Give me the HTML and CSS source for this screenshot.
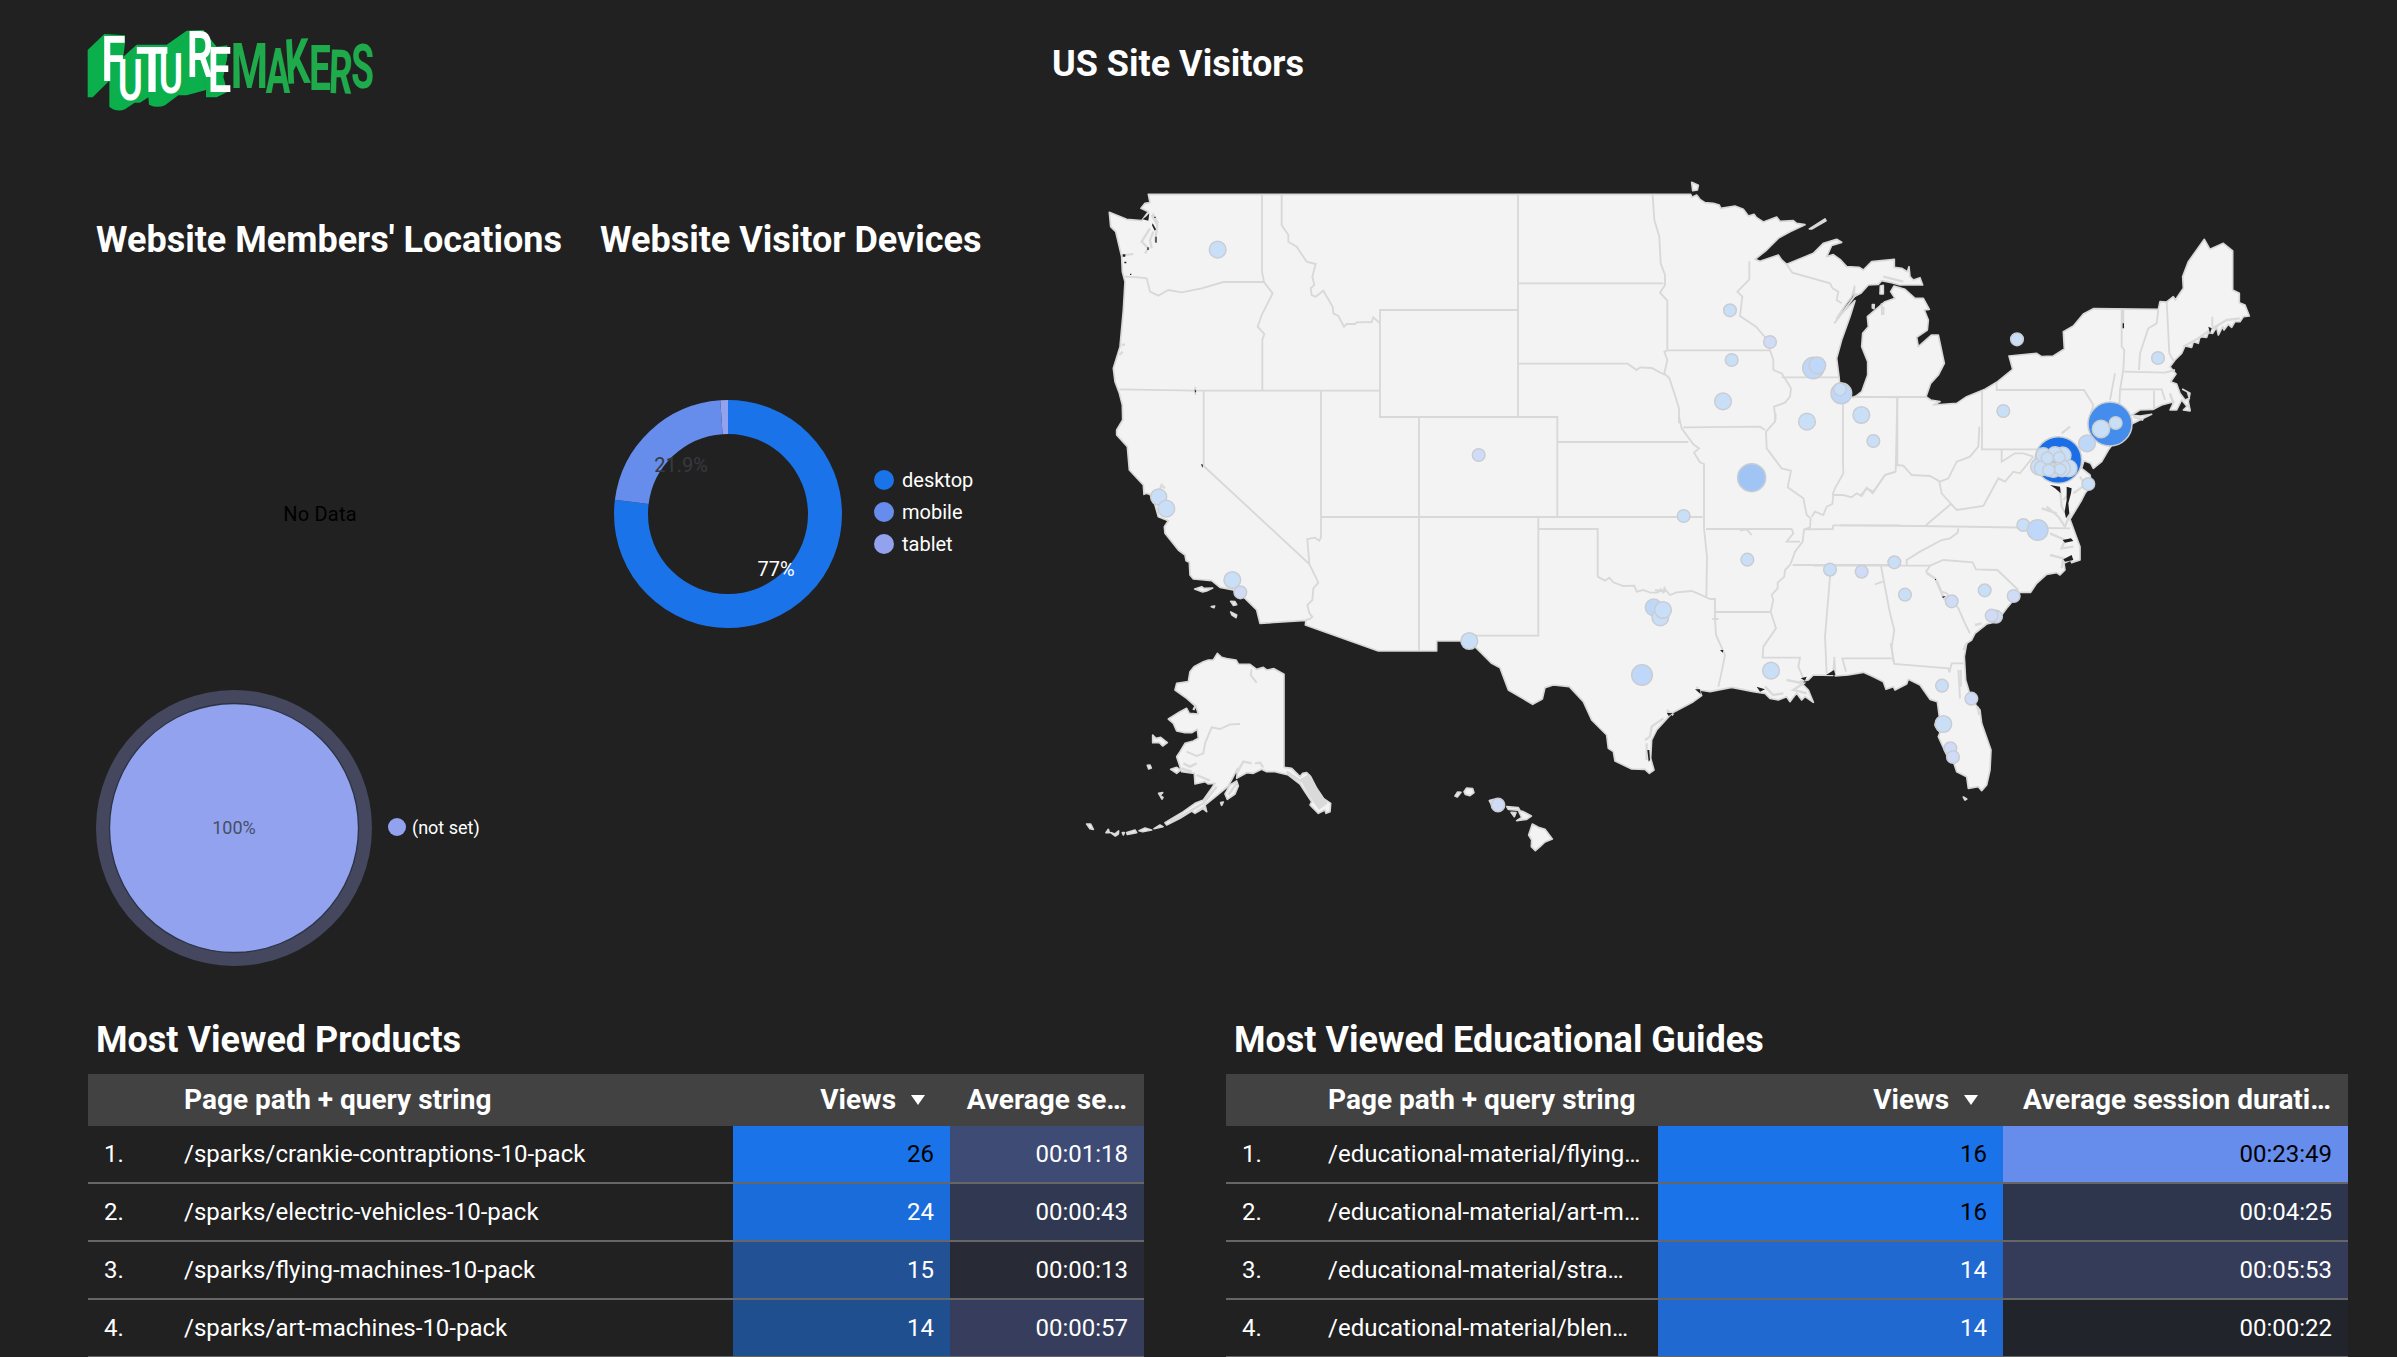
FILE: index.html
```html
<!DOCTYPE html>
<html lang="en">
<head>
<meta charset="utf-8">
<title>US Site Visitors</title>
<link rel="stylesheet" href="styles.css">
</head>
<body>
<div class="page">
  <header class="header">
    <svg class="logo" viewBox="0 0 990 360" role="img" aria-label="Futuremakers">
      <path class="logo-depth" d="M53 120L103 72L165 76V100L160 140L200 104L290 104L350 62L400 60L416 80L440 110L472 106V140L460 200L472 246L440 262H408V240L350 256L325 256L285 286Q262 296 237 284L235 262L210 278L194 278L165 298Q140 308 118 290V212L68 262H53Z"/>
      <path class="logo-line" d="M103 76L76 108M190 120L180 150M358 70L312 120M345 210L330 240M400 200L412 250M440 165L472 150"/>
      <g class="logo-front">
        <text transform="translate(94 212) scale(.7 1)" font-size="190">F</text>
        <text transform="translate(143 270) scale(.66 1)" font-size="174">U</text>
        <text transform="translate(197 245) scale(.84 1)" font-size="190">T</text>
        <text transform="translate(266 249) scale(.66 1)" font-size="168">U</text>
        <text transform="translate(350 202) scale(.64 1)" font-size="194">R</text>
        <text transform="translate(413 246) scale(.66 1)" font-size="190">E</text>
      </g>
      <g class="logo-back">
        <text transform="translate(482 235) scale(.68 1)" font-size="188">M</text>
        <text transform="translate(587 250) scale(.58 1)" font-size="188">A</text>
        <text transform="translate(648 222) rotate(-3) scale(.62 1)" font-size="188">K</text>
        <text transform="translate(717 240) scale(.62 1)" font-size="188">E</text>
        <text transform="translate(775 249) rotate(2) scale(.6 1)" font-size="184">R</text>
        <text transform="translate(844 234) scale(.6 1)" font-size="184">S</text>
      </g>
    </svg>
    <h1 class="title">US Site Visitors</h1>
  </header>

  <section class="overview">
    <div class="panels">
      <div class="panel">
        <h2 class="heading">Website Members' Locations</h2>
        <p class="no-data">No Data</p>
        <div class="chart-row">
          <svg class="pie" viewBox="0 0 276 276">
            <circle cx="138" cy="138" r="138" fill="#45475f"/>
            <circle cx="138" cy="138" r="124.5" fill="#92a2ef" stroke="#2b3443" stroke-width="1.3"/>
            <text class="pie-label" x="138" y="144">100%</text>
          </svg>
          <ul class="legend legend-small"><li><i class="dot c3"></i>(not set)</li></ul>
        </div>
      </div>
      <div class="panel devices">
        <h2 class="heading">Website Visitor Devices</h2>
        <div class="chart-row donut-row">
          <svg class="donut" viewBox="0 0 228 228">
            <g transform="rotate(-90 114 114)" fill="none" stroke-width="34">
              <circle cx="114" cy="114" r="97" stroke="#1a73e8" pathLength="100" stroke-dasharray="77 23"/>
              <circle cx="114" cy="114" r="97" stroke="#668cec" pathLength="100" stroke-dasharray="21.9 78.1" stroke-dashoffset="-77"/>
              <circle cx="114" cy="114" r="97" stroke="#92a2ef" pathLength="100" stroke-dasharray="1.1 98.9" stroke-dashoffset="-98.9"/>
            </g>
            <text class="donut-label dim" x="67" y="72">21.9%</text>
            <text class="donut-label" x="162" y="176">77%</text>
          </svg>
          <ul class="legend">
            <li><i class="dot c1"></i>desktop</li>
            <li><i class="dot c2"></i>mobile</li>
            <li><i class="dot c3"></i>tablet</li>
          </ul>
        </div>
      </div>
    </div>

    <svg class="map" viewBox="0 0 3630 2160">
      <g class="land">
        <path d="M235 103L1862 103 1866 112 1880 105 1890 118 1905 128 1930 130 1948 135 1952 145 1995 138 2020 148 2035 168 2052 163 2060 173 2080 186 2120 171 2130 184 2170 182 2180 190 2205 194 2160 215 2127 233 2090 270 2055 298 2070 304 2125 285 2135 300 2150 313 2230 280 2260 250 2300 238 2315 247 2285 256 2270 290 2290 284 2310 298 2330 320 2368 322 2380 330 2405 305 2473 298 2473 322 2495 325 2512 335 2517 320 2520 350 2530 360 2550 353 2558 375 2490 375 2465 368 2435 362 2425 373 2395 375 2372 400 2352 410 2354 378 2345 410 2330 430 2300 475 2355 422 2340 470 2315 540 2300 595 2307 650 2310 680 2330 705 2352 713 2375 695 2393 645 2393 605 2375 560 2378 520 2395 500 2392 470 2445 425 2475 415 2462 395 2472 378 2505 388 2535 415 2560 415 2578 448 2563 450 2575 480 2572 510 2540 532 2545 560 2585 525 2605 525 2623 610 2605 645 2582 670 2568 710 2582 720 2610 725 2590 735 2660 730 2690 710 2745 688 2780 667 2828 628 2817 588 2900 580 2915 590 2950 588 2983 567 2980 515 3010 498 3040 462 3070 446 3265 448 3270 425 3290 426 3310 410 3316 420 3340 385 3338 350 3355 305 3403 238 3420 268 3460 250 3488 273 3488 390 3508 400 3508 428 3525 435 3538 468 3520 470 3510 485 3495 485 3485 502 3475 493 3462 510 3458 500 3445 525 3440 502 3428 520 3415 518 3410 532 3390 530 3385 550 3370 545 3365 562 3345 558 3335 580 3315 600 3300 620 3318 642 3302 665 3320 672 3330 700 3345 720 3358 715 3352 695 3338 688 3360 700 3355 725 3360 750 3335 720 3320 750 3300 750 3312 725 3275 735 3250 748 3210 750 3185 765 3210 768 3245 763 3185 792 3130 850 3115 870 3095 905 3070 925 3062 910 3042 902 3035 925 3060 945 3065 975 3045 1000 3035 1020 3020 1045 3000 1078 3030 1160 3030 1200 3005 1208 3002 1200 2982 1210 2985 1230 2970 1245 2960 1238 2930 1243 2900 1270 2882 1297 2850 1297 2810 1345 2780 1385 2750 1392 2715 1420 2705 1440 2690 1450 2683 1490 2687 1560 2705 1620 2730 1650 2735 1690 2763 1770 2760 1830 2750 1875 2735 1892 2725 1880 2695 1885 2690 1850 2660 1835 2650 1805 2630 1785 2605 1730 2610 1718 2595 1695 2608 1670 2602 1625 2580 1618 2550 1575 2515 1558 2510 1572 2475 1590 2470 1580 2448 1588 2440 1565 2410 1550 2380 1537 2335 1545 2296 1548 2293 1500 2288 1546 2230 1545 2215 1560 2190 1565 2215 1590 2230 1627 2205 1610 2195 1620 2180 1600 2170 1612 2160 1625 2150 1610 2125 1620 2100 1615 2085 1600 2050 1595 1985 1582 1920 1595 1888 1590 1895 1607 1870 1625 1805 1660 1760 1710 1745 1740 1742 1795 1752 1830 1738 1840 1725 1828 1685 1827 1635 1803 1630 1775 1615 1765 1610 1725 1565 1680 1540 1625 1498 1580 1450 1575 1425 1583 1417 1617 1388 1633 1315 1590 1290 1523 1265 1510 1220 1465 1198 1443 1100 1443 1100 1473 925 1473 706 1395 708 1381 570 1390 560 1350 525 1315 490 1290 450 1282 425 1262 370 1257 360 1245 358 1207 348 1202 345 1185 325 1170 285 1120 283 1100 295 1082 265 1070 255 1035 240 1003 230 1000 222 1003 220 975 178 930 172 860 140 825 140 810 158 780 157 735 148 700 135 665 130 625 150 560 160 450 165 365 157 335 155 290 137 215 122 200 118 157 170 178 215 182 235 155 213 145 225 130 240 128Z"/>
        <path d="M2218 207L2265 177 2268 182 2225 207ZM1865 67L1885 76 1882 90 1868 92ZM2431 378L2440 376 2440 402 2430 402ZM2407 434L2413 434 2412 446 2407 444ZM374 1287L395 1280 402 1285 428 1284 410 1293 398 1296ZM482 1324L495 1325 500 1334 490 1336ZM482 1356L500 1365 498 1373 486 1365ZM424 1340L434 1338 432 1343ZM2680 1911L2690 1917 2685 1920ZM3340 750L3355 735 3360 753Z"/>
        <g transform="translate(0 1410)">
          <path d="M442 70L455 82 470 86 498 90 505 102 540 103 560 118 580 112 590 120 612 116 642 133 642 412 665 415 690 440 698 430 710 428 722 440 740 475 760 505 782 520 780 545 768 550 765 540 745 550 720 525 725 515 705 485 690 462 655 435 615 425 590 425 575 418 550 430 530 428 500 445 503 415 495 430 475 468 430 505 405 525 410 545 398 535 375 550 365 543 330 565 290 585 285 578 340 545 375 520 400 510 425 475 435 460 415 462 405 455 375 462 373 430 335 425 330 410 320 380 330 365 345 340 370 333 385 325 382 298 365 308 345 308 320 303 310 280 295 267 330 245 350 235 358 250 385 252 378 230 350 205 315 180 320 160 355 155 360 125 372 110 400 95 415 90 430 90Z"/>
          <path d="M248 315L258 325 272 322 292 338 278 348 268 338 248 338ZM302 418L320 412 332 420 320 430ZM232 406L240 405 244 414 236 417ZM266 490L278 488 270 496 279 502 276 507ZM465 492L480 465 500 453 505 468 495 492 472 508ZM452 518L460 516 455 526ZM50 582L62 582 70 598 60 596ZM108 608L115 598 118 608ZM122 608L135 612 146 603 145 612 136 618ZM157 608L163 608 160 615ZM170 608L195 600 200 608 172 613ZM207 602L225 594 245 600 218 605ZM252 596L270 585 279 590ZM1155 498L1163 486 1173 487 1162 501ZM1182 485L1190 474 1208 476 1212 488 1200 497 1186 493ZM1258 512L1272 508 1280 520 1265 525ZM1310 530L1345 533 1350 541 1315 538ZM1323 547L1338 548 1333 560ZM1345 542L1360 545 1384 558 1370 568 1340 572 1355 562ZM1387 582L1405 592 1425 598 1447 627 1425 636 1410 650 1396 662 1384 650 1385 630 1376 615Z"/>
        </g>
      </g>
      <g class="borders">
        <path d="M165 350L205 352 230 355 240 395 265 407 295 390 335 397 395 385 460 366 582 366M576 105V335L582 366 608 400 575 465 563 500 583 522 577 540V690M635 105V195L655 225V245L680 260 710 305 737 312 727 350 733 375 722 385 725 405 737 410 760 392 788 440 790 460 805 468 822 500 830 492H855L860 487 905 486 910 472 930 490M1344 450H930V771H1462V1071M148 688L376 692H930M401 692V918L718 1212 745 1268 730 1285 727 1320 712 1335 718 1360 727 1370 720 1377 708 1380M753 690V1132L748 1142 735 1133 712 1137 718 1212M753 1071H1898M1047 771V1473M1405 1071V1427H1198M1405 1107H1583V1250M376 680V705M2293 1490V1540M248 160L265 190M165 285L190 282"/>
        <path transform="translate(1230 0)" d="M114 105V770M114 370H550M114 611H443L470 630 480 622 515 624 555 645M518 105L523 180 538 230 542 310 555 345V375L540 398 562 422V571L553 575 562 600 553 640 568 655 583 700 597 745V790M562 571H870M808 304V358L772 395 787 410 780 468 828 500 858 535 870 571 880 600V630L905 640 933 685 930 710 915 728 882 740 887 780M905 652H1077M920 313L937 338 1050 370 1058 385 1075 395 1070 420 1085 430M1089 720V905L1090 940 1065 985 1057 1005M1120 710L1260 712M1252 712V915M1130 400L1063 490M1205 430L1206 465"/>
        <path transform="translate(1230 720)" d="M232 126H625M597 50L605 85 640 133 657 145 642 158 660 187 672 192V385L681 470 679 595M610 82L840 80 855 90M887 40L885 65 858 95 860 145 905 205 933 212 923 262 970 295 980 345 992 355 990 382 972 388 968 425 945 455 940 470 930 495 915 510 913 530 893 548 893 565 875 585 880 600 872 635 888 685 850 740 848 773H960L955 800 972 840M678 387H935L940 400 920 425H960M707 636H875M995 350L1005 335 1030 345 1040 320 1057 312 1060 285 1090 285 1115 292 1130 280 1145 288 1160 263 1178 280 1215 225 1248 215M972 388L1058 387 1060 376H1260M938 495H1230M1053 495L1035 710 1040 820M1203 498L1230 640 1243 690 1235 740 1240 785M1098 815L1087 775H1235M353 530L375 542 388 533 400 547 430 558 463 557 470 575 490 570 510 578 530 578 555 568 570 585 590 577 635 573 660 583 690 597H705V655L708 705 735 765 722 830 715 860M525 570L555 575M540 565L552 580M553 560L555 575M780 392L800 388 815 405M697 657H715M1185 553L1208 545"/>
        <path transform="translate(2310 960)" d="M0 136L240 138 690 145M255 138L333 72M355 145L353 158 330 175 305 180 240 215 200 240V255M-80 257H270L310 240 398 247 408 268 472 270 535 330M270 257L258 275 290 300 305 335 320 340 355 385 375 430 390 460M152 490L163 552 325 565 328 577 335 550H370M355 570L360 655"/>
        <path transform="translate(2370 180)" d="M-10 531H198M112 535L107 755 75 765 40 815 20 805 0 828M107 735L130 737 155 765 210 768 240 785 265 775 290 725 330 710 355 680 358 620M366 510V688H540M410 487V510H672L700 555 690 590M238 785L245 820 290 870 370 858 415 775 435 785 460 755 480 760 520 710M425 688V725L465 700H490L520 710M785 266V380L793 390 790 450 780 510 778 560M793 455L915 458 945 450M780 508H905L915 540M882 512V568M895 268L890 310 865 325 840 400 837 450M920 245L928 400 942 425M765 460L750 540M790 270V325M1057 290V320"/>
        <path transform="translate(0 1410)" d="M545 118L542 135 560 158M510 282L480 283 450 297 425 292 405 340 400 370 380 378 350 365"/>
      </g>
      <g class="shore">
        <path d="M240 205L215 245 235 265 225 280M250 215L240 240 245 265M245 165L262 195 255 245M155 555L165 553M148 585L158 575M265 1000L275 975 285 985M3000 800L2975 820M2930 1040L2965 1070 2985 1100 3000 1060M2915 1045L2960 1060M2940 1120L2985 1140 2975 1165 3010 1160M2940 1185L2980 1195 2975 1225M2970 985L2975 1040 2995 1075M3000 1000L2980 1020M3030 950L3045 975 3010 1000M2570 1240L2595 1255 2615 1300 2625 1320M2715 1395L2735 1390M2690 1450L2680 1470M2672 1530V1580M2722 1640L2728 1665M1725 1740L1740 1730 1745 1700 1780 1675M1730 1750V1800M1880 1580L1890 1600M1790 1650L1810 1665M2150 1560L2200 1570 2170 1590 2210 1600M2085 1580L2110 1605 2140 1600M3340 560L3385 535 3420 510 3470 480 3510 475M3300 700L3310 730M3190 770L3220 780M2440 440V465M2440 350L2500 365"/>
        <path transform="translate(0 1410)" d="M650 425L695 455M500 430L520 395 545 400M555 400L570 398 580 412M340 400L360 410 380 400M335 415L365 425M440 470L400 520 340 555 300 575M380 435L420 452M380 545L405 530M500 460L475 495M370 240L378 225"/>
        <path class="fjords" transform="translate(0 1410)" d="M704 440L728 484 760 530"/>
      </g>
      <g class="water">
        <path d="M218 178L235 182 238 160 228 170ZM248 190L258 208 254 212 246 196ZM158 283H166V290H158ZM374 688L379 693 375 699ZM393 912L399 914 397 924ZM2990 980L3005 985 3003 1000 2995 1030 2998 1060 2988 1075 2984 1055 2990 1020ZM2940 975L2970 980 2972 1000 2955 985ZM2978 1140L3003 1135 3010 1143 2985 1148ZM2980 1198L3005 1185 3010 1200 2985 1205ZM1875 1588L1890 1588 1892 1602ZM1790 1658L1808 1660 1796 1668ZM2060 1580L2085 1588 2070 1595ZM2192 1555L2210 1550 2205 1562ZM2268 1545L2292 1530 2296 1545ZM1950 1470L1960 1470 1958 1478ZM2595 1257H2598V1260H2595ZM2615 1310L2628 1308 2620 1314ZM3415 500L3425 505 3420 520ZM3158 490H3162V505H3158ZM1732 1770L1738 1770 1740 1800 1736 1805Z"/>
        <path d="M253 170H257V174H253ZM256 230H260V248H256ZM232 262H236V270H232ZM180 341H184V345H180ZM163 305H169V310H163Z"/>
      </g>
      <g class="pins">
        <circle cx="443" cy="269" r="25"/><circle cx="266" cy="1011" r="24"/><circle cx="289" cy="1046" r="25"/><circle cx="487" cy="1260" r="25"/><circle class="v" cx="511" cy="1297" r="19"/><circle cx="1198" cy="1443" r="25"/><circle class="v" cx="1226" cy="885" r="19"/><circle class="v" cx="1284" cy="1935" r="20"/>
        <g transform="translate(1230 0)"><circle cx="750" cy="451" r="19"/><circle class="v" cx="870" cy="546" r="19"/><circle cx="755" cy="600" r="19"/><circle cx="729" cy="724" r="25"/><circle class="m" cx="1000" cy="624" r="32"/><circle class="m" cx="1012" cy="616" r="25"/><circle class="m" cx="1084" cy="700" r="31"/><circle cx="1080" cy="688" r="19"/></g>
        <g transform="translate(1230 720)"><circle cx="981" cy="65" r="25"/><circle cx="1144" cy="45" r="25"/><circle cx="1180" cy="123" r="19"/><circle class="b" cx="815" cy="233" r="42"/><circle cx="611" cy="348" r="19"/><circle cx="802" cy="479" r="19"/><circle cx="1050" cy="509" r="19"/><circle class="v" cx="1145" cy="515" r="19"/><circle cx="1243" cy="487" r="19"/><circle class="m" cx="521" cy="622" r="25"/><circle cx="541" cy="652" r="25"/><circle cx="549" cy="630" r="25"/><circle class="m" cx="486" cy="825" r="31"/><circle cx="873" cy="812" r="25"/></g>
        <g transform="translate(2310 960)"><circle cx="195" cy="344" r="19"/><circle class="v" cx="335" cy="364" r="19"/><circle cx="434" cy="331" r="19"/><circle class="v" cx="521" cy="348" r="19"/><circle class="v" cx="468" cy="410" r="19"/><circle class="v" cx="455" cy="407" r="19"/><circle cx="550" cy="135" r="19"/><circle class="m" cx="593" cy="150" r="31"/><circle cx="306" cy="617" r="19"/><circle class="v" cx="394" cy="656" r="19"/><circle cx="310" cy="732" r="25"/><circle class="v" cx="331" cy="805" r="19"/><circle class="v" cx="339" cy="831" r="19"/></g>
        <g transform="translate(2370 180)"><circle cx="471" cy="358" r="19"/><circle cx="894" cy="414" r="19"/><circle cx="430" cy="573" r="19"/><circle class="d1" cx="750" cy="612" r="66"/><circle cx="723" cy="627" r="26"/><circle cx="767" cy="609" r="19"/><circle class="m" cx="681" cy="670" r="25"/><circle class="d2" cx="595" cy="720" r="70"/><circle cx="685" cy="792" r="19"/>
          <circle cx="537" cy="740" r="25"/><circle cx="550" cy="705" r="22"/><circle cx="608" cy="706" r="25"/><circle cx="626" cy="745" r="25"/><circle cx="585" cy="702" r="22"/><circle cx="580" cy="750" r="22"/><circle cx="606" cy="745" r="25"/><circle cx="545" cy="745" r="22"/><circle cx="562" cy="714" r="18"/><circle cx="598" cy="712" r="17"/><circle cx="566" cy="751" r="18"/><circle cx="601" cy="748" r="17"/></g>
      </g>
    </svg>
  </section>

  <section class="tables">
    <div class="table-block products">
      <h2 class="heading">Most Viewed Products</h2>
      <div class="table">
        <div class="row head"><span></span><span>Page path + query string</span><span class="num">Views <i class="sort"></i></span><span class="num">Average se…</span></div>
        <div class="row"><span>1.</span><span>/sparks/crankie-contraptions-10-pack</span><span class="num dark" style="background:#1a73e8">26</span><span class="num" style="background:#3d4b75">00:01:18</span></div>
        <div class="row"><span>2.</span><span>/sparks/electric-vehicles-10-pack</span><span class="num" style="background:#1b6cdb">24</span><span class="num" style="background:#303951">00:00:43</span></div>
        <div class="row"><span>3.</span><span>/sparks/flying-machines-10-pack</span><span class="num" style="background:#235196">15</span><span class="num" style="background:#282b35">00:00:13</span></div>
        <div class="row"><span>4.</span><span>/sparks/art-machines-10-pack</span><span class="num" style="background:#1f4f8f">14</span><span class="num" style="background:#373e5d">00:00:57</span></div>
      </div>
    </div>
    <div class="table-block guides">
      <h2 class="heading">Most Viewed Educational Guides</h2>
      <div class="table">
        <div class="row head"><span></span><span>Page path + query string</span><span class="num">Views <i class="sort"></i></span><span class="num">Average session durati…</span></div>
        <div class="row"><span>1.</span><span>/educational-material/flying…</span><span class="num dark" style="background:#1a73e8">16</span><span class="num dark" style="background:#668cec">00:23:49</span></div>
        <div class="row"><span>2.</span><span>/educational-material/art-m…</span><span class="num dark" style="background:#1a73e8">16</span><span class="num" style="background:#2d364d">00:04:25</span></div>
        <div class="row"><span>3.</span><span>/educational-material/stra…</span><span class="num" style="background:#1f69d1">14</span><span class="num" style="background:#353c5a">00:05:53</span></div>
        <div class="row"><span>4.</span><span>/educational-material/blen…</span><span class="num" style="background:#1f69d1">14</span><span class="num" style="background:#22242b">00:00:22</span></div>
      </div>
    </div>
  </section>
</div>
</body>
</html>
```
FILE: styles.css
```css
* { box-sizing: border-box; }
body { margin: 0; background: #212121; color: #fff; font-family: Roboto, "Liberation Sans", sans-serif; }
h1, h2, p, ul { margin: 0; padding: 0; }
ul { list-style: none; }
.page { width: 2397px; height: 1357px; overflow: hidden; display: flex; flex-direction: column; background: #212121; }

.header { display: flex; height: 130px; padding: 10px 0 0 70px; flex: none; }
.logo { width: 330px; height: 120px; flex: none; }
.logo text { font-family: Roboto, sans-serif; }
.logo-depth { fill: #0bb04c; }
.logo-line { fill: none; stroke: #239a48; stroke-width: 2; }
.logo-front { fill: #fff; font-weight: 600; }
.logo-back { fill: #1fab4b; font-weight: 700; }
.title { margin-left: 652px; line-height: 42px; margin-top: 33px; }
.title, .heading { font-size: 36px; font-weight: 700; white-space: nowrap; }
.heading { line-height: 42px; }

.overview { display: flex; height: 880px; flex: none; }
.panels { display: flex; width: 1070px; padding: 89px 0 0 96px; flex: none; }
.panel { width: 504px; display: flex; flex-direction: column; flex: none; }
.devices { width: 470px; }
.no-data { width: 448px; margin-top: 240px; text-align: center; font-size: 20px; line-height: 26px; color: #000; letter-spacing: .2px; }
.chart-row { display: flex; align-items: center; }
.panel .pie { width: 276px; height: 276px; }
.no-data + .chart-row { margin-top: 163px; }
.donut-row { margin: 139px 0 0 14px; }
.donut { width: 228px; height: 228px; }
.donut-label { font-size: 20px; fill: #fff; text-anchor: middle; }
.donut-label.dim { fill: #37393d; }
.pie-label { font-size: 18px; fill: #454f66; text-anchor: middle; }
.legend { font-size: 20px; margin: -4px 0 0 32px; }
.legend li { display: flex; align-items: center; gap: 8px; height: 32px; }
.dot { width: 20px; height: 20px; border-radius: 50%; }
.legend-small { font-size: 18px; margin: -2px 0 0 16px; }
.legend-small li { gap: 6px; }
.legend-small .dot { width: 18px; height: 18px; }
.c1 { background: #1a73e8; }
.c2 { background: #668cec; }
.c3 { background: #92a2ef; }

.map { width: 1210px; height: 720px; margin-top: 30px; flex: none; }
.land { fill: #f3f3f3; stroke: #d8d8d8; stroke-width: 5; stroke-linejoin: round; }
.borders { fill: none; stroke: #d8d8d8; stroke-width: 5.5; }
.shore { fill: none; stroke: #dadada; stroke-width: 7; }
.shore .fjords { stroke-width: 32; }
.water { fill: #212121; }
.pins { fill: #c9dff8; stroke: #c9cdd2; stroke-width: 4.5; }
.pins .v { fill: #d0dcf7; }
.pins .m { fill: #bfd7f8; }
.pins .b { fill: #a0c5f4; }
.pins .d1 { fill: #448dec; }
.pins .d2 { fill: #1a6fe9; }

.tables { display: flex; gap: 82px; padding: 9px 0 0 88px; }
.table-block .heading { padding-left: 8px; height: 55px; }
.products { width: 1056px; }
.guides { width: 1122px; }
.row { display: grid; height: 58px; border-bottom: 2px solid #666; font-size: 24px; line-height: 56px; white-space: nowrap; }
.products .row { grid-template-columns: 80px 565px 217px 194px; }
.guides .row { grid-template-columns: 86px 346px 345px 345px; }
.row span { padding: 0 16px; }
.row.head { height: 52px; border: 0; background: #424242; font-size: 28px; font-weight: 700; line-height: 52px; }
.row.head .num { padding-right: 17px; padding-left: 0; }
.num { text-align: right; }
.dark { color: #000; }
.sort { display: inline-block; margin: 0 8px 4px 8px; border: 7px solid transparent; border-top: 10px solid #fff; border-bottom: 0; }
```
